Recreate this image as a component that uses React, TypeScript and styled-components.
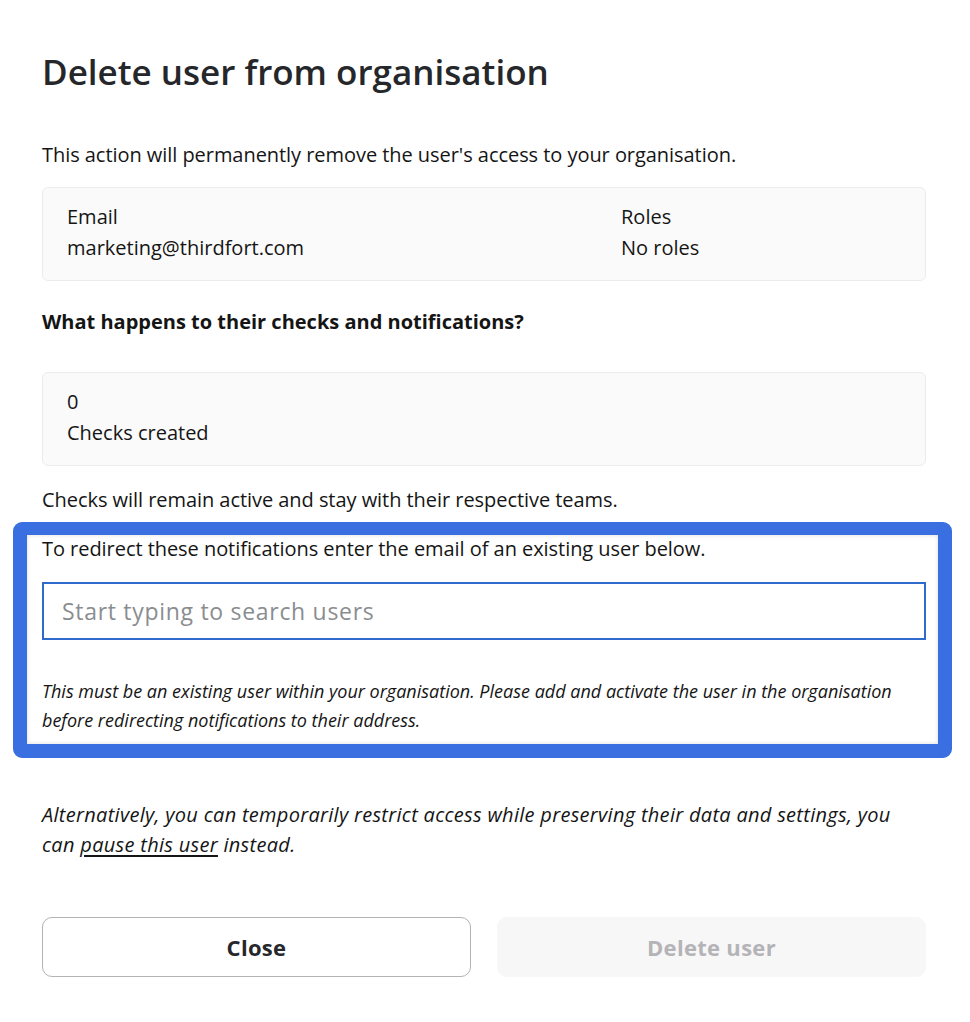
import React from "react";
import styled, { createGlobalStyle } from "styled-components";

const GlobalStyle = createGlobalStyle`
  body {
    margin: 0;
    background: #ffffff;
    font-family: "Open Sans", "Noto Sans", sans-serif;
    color: #151515;
  }
  * {
    box-sizing: border-box;
  }
`;

export default function App() {
  return (
    <>
      <GlobalStyle />
      <Modal>
        <Title>Delete user from organisation</Title>
        <Text>This action will permanently remove the user's access to your organisation.</Text>
        <InfoCard>
          <Field>
            <Label>Email</Label>
            <Value>marketing@thirdfort.com</Value>
          </Field>
          <Field>
            <Label>Roles</Label>
            <Value>No roles</Value>
          </Field>
        </InfoCard>
        <SubTitle>What happens to their checks and notifications?</SubTitle>
        <InfoCard>
          <Field>
            <Label>0</Label>
            <Value>Checks created</Value>
          </Field>
        </InfoCard>
        <Text $gap={20}>Checks will remain active and stay with their respective teams.</Text>
        <Highlight>
          <Text>To redirect these notifications enter the email of an existing user below.</Text>
          <SearchInput placeholder="Start typing to search users" />
          <Note>
            This must be an existing user within your organisation. Please add and activate the user in the
            organisation before redirecting notifications to their address.
          </Note>
        </Highlight>
        <Alternative>
          Alternatively, you can temporarily restrict access while preserving their data and settings, you
          can <PauseLink href="#">pause this user</PauseLink> instead.
        </Alternative>
        <Actions>
          <Button>Close</Button>
          <Button disabled>Delete user</Button>
        </Actions>
      </Modal>
    </>
  );
}

const Modal = styled.div`
  display: flex;
  flex-direction: column;
  padding: 48px 44px 45px 42px;
`;

const Title = styled.h1`
  margin: 0 0 45px;
  font-size: 35px;
  line-height: 48px;
  font-weight: 600;
  color: #26272b;
`;

const Text = styled.p<{ $gap?: number }>`
  margin: ${(p) => p.$gap ?? 0}px 0 0;
  font-size: 20px;
  line-height: 28px;
  letter-spacing: -0.05px;
`;

const InfoCard = styled.div`
  display: grid;
  grid-template-columns: 554px 1fr;
  margin-top: 18px;
  padding: 15px 24px 18px;
  background: #fafafa;
  border: 1px solid #ececec;
  border-radius: 6px;
`;

const Field = styled.div`
  display: flex;
  flex-direction: column;
  gap: 3px;
`;

const Label = styled.span`
  font-size: 20px;
  line-height: 28px;
  font-weight: 500;
`;

const Value = styled.span`
  font-size: 20px;
  line-height: 28px;
`;

const SubTitle = styled.h2`
  margin: 27px 0 18px;
  font-size: 20px;
  line-height: 28px;
  font-weight: 700;
`;

const Highlight = styled.section`
  display: flex;
  flex-direction: column;
  margin: 8px -26px 0 -29px;
  padding: 0 12px 9px 15px;
  border: 14px solid #3a6fe1;
  border-top-width: 13px;
  border-radius: 9px;
  box-shadow: inset 0 0 4px rgba(0, 0, 0, 0.14);
`;

const SearchInput = styled.input`
  margin: 19px 0 37px;
  height: 58px;
  padding: 0 18px;
  border: 2px solid #2f6bcc;
  font-family: inherit;
  font-size: 23px;
  letter-spacing: 0.7px;
  color: #151515;
  outline: none;

  &::placeholder {
    color: #8a8d90;
  }
`;

const Note = styled.p`
  margin: 0;
  font-size: 18px;
  line-height: 29px;
  font-style: italic;
`;

const Alternative = styled.p`
  margin: 42px 0 57px;
  font-size: 20px;
  line-height: 30px;
  font-style: italic;
  letter-spacing: 0.3px;
`;

const PauseLink = styled.a`
  color: #151515;
  text-decoration: underline;
  text-underline-offset: 3px;
`;

const Actions = styled.div`
  display: grid;
  grid-template-columns: 1fr 1fr;
  gap: 26px;
`;

const Button = styled.button`
  height: 60px;
  border-radius: 10px;
  border: 1px solid #b3b3b3;
  background: #ffffff;
  font-family: inherit;
  font-size: 22px;
  font-weight: 700;
  letter-spacing: 0.3px;
  color: #26272b;
  cursor: pointer;

  &:disabled {
    border-color: #f7f7f7;
    background: #f7f7f7;
    color: #b4b4b7;
    cursor: default;
  }
`;
